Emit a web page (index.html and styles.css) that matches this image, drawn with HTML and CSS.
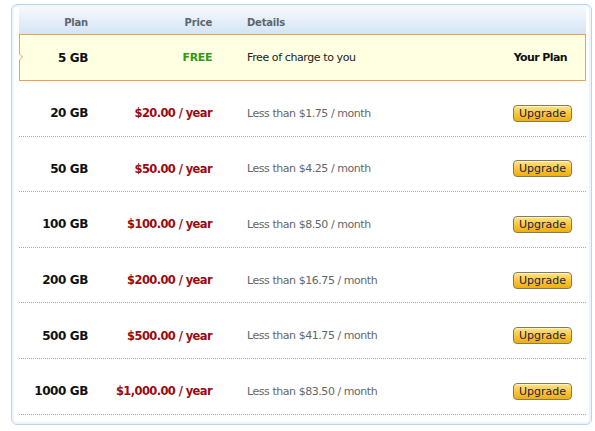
FILE: index.html
```html
<!DOCTYPE html>
<html>
<head>
<meta charset="utf-8">
<link rel="stylesheet" href="styles.css">
</head>
<body>
<div class="frame">
  <div class="plans">
    <div class="row head">
      <div class="c plan">Plan</div>
      <div class="c price">Price</div>
      <div class="c details">Details</div>
      <div class="c action"></div>
    </div>
    <div class="row current">
      <div class="c plan">5 GB</div>
      <div class="c price free">FREE</div>
      <div class="c details">Free of charge to you</div>
      <div class="c action yours">Your Plan</div>
    </div>
    <div class="row item">
      <div class="c plan">20 GB</div>
      <div class="c price">$20.00 / year</div>
      <div class="c details">Less than $1.75 / month</div>
      <div class="c action"><button class="btn">Upgrade</button></div>
    </div>
    <div class="row item">
      <div class="c plan">50 GB</div>
      <div class="c price">$50.00 / year</div>
      <div class="c details">Less than $4.25 / month</div>
      <div class="c action"><button class="btn">Upgrade</button></div>
    </div>
    <div class="row item">
      <div class="c plan">100 GB</div>
      <div class="c price">$100.00 / year</div>
      <div class="c details">Less than $8.50 / month</div>
      <div class="c action"><button class="btn">Upgrade</button></div>
    </div>
    <div class="row item">
      <div class="c plan">200 GB</div>
      <div class="c price">$200.00 / year</div>
      <div class="c details">Less than $16.75 / month</div>
      <div class="c action"><button class="btn">Upgrade</button></div>
    </div>
    <div class="row item">
      <div class="c plan">500 GB</div>
      <div class="c price">$500.00 / year</div>
      <div class="c details">Less than $41.75 / month</div>
      <div class="c action"><button class="btn">Upgrade</button></div>
    </div>
    <div class="row item">
      <div class="c plan">1000 GB</div>
      <div class="c price">$1,000.00 / year</div>
      <div class="c details">Less than $83.50 / month</div>
      <div class="c action"><button class="btn">Upgrade</button></div>
    </div>
  </div>
</div>
</body>
</html>
```
FILE: styles.css
```css
* { box-sizing: border-box; }
html, body { margin: 0; padding: 0; background: #fff; }
body {
  font-family: "DejaVu Sans", Verdana, sans-serif;
  font-size: 11px;
  color: #222;
}
.frame {
  margin: 4px 0 0 11px;
  width: 581px;
  height: 421px;
  padding: 1px 5px 6px 7px;
  border: 1px solid #b7d4f0;
  border-radius: 6px;
  box-shadow: inset 0 0 0 2px #edf4fc;
  background: #fff;
}
.plans { width: 567px; }
.row {
  display: grid;
  grid-template-columns: 81px 119px 267px 100px;
  align-items: center;
}
.c { white-space: nowrap; }
.plan {
  text-align: right; padding-right: 12px;
  font-weight: bold; font-size: 12px; letter-spacing: -0.4px; color: #111;
}
.price {
  text-align: right; padding-right: 7px;
  font-weight: bold; font-size: 11.5px; letter-spacing: -0.6px; color: #9b0a10;
}
.details { padding-left: 28px; color: #666; letter-spacing: -0.45px; }
.action { display: flex; justify-content: flex-end; padding-right: 14px; }

.head {
  height: 28px;
  padding-top: 4px;
  background: linear-gradient(#f7fafd, #d4e4f5);
}
.head .c { font-size: 10px; font-weight: bold; letter-spacing: -0.2px; color: #5c6670; }

.current {
  position: relative;
  height: 47px;
  background: #ffffe1;
  border: 1px solid #f1a04a;
}
.current::before {
  content: "";
  position: absolute;
  left: -1px; top: 18px;
  border-top: 4px solid transparent;
  border-bottom: 4px solid transparent;
  border-left: 4px solid #f1a04a;
}
.current::after {
  content: "";
  position: absolute;
  left: -1px; top: 19px;
  border-top: 3px solid transparent;
  border-bottom: 3px solid transparent;
  border-left: 3px solid #fff;
}
.current .plan { padding-right: 13px; }
.current .price { padding-right: 8px; }
.current .details { padding-left: 27px; color: #222; letter-spacing: -0.4px; }
.free { color: #2f9a17; font-size: 11px; letter-spacing: -0.4px; }
.yours { font-weight: bold; color: #111; padding-right: 20px; letter-spacing: -0.6px; }

.item {
  height: 55.6px;
  padding-top: 10px;
  border-bottom: 1px dotted #a8a8a8;
}
.btn {
  width: 59px;
  height: 17px;
  padding: 0;
  font-family: Tahoma, "DejaVu Sans", sans-serif;
  font-size: 11px;
  color: #1c1c4e;
  border: 1px solid #8a7a50;
  border-radius: 4px;
  background: linear-gradient(#ffe48a, #f9c73a 50%, #eeae12);
  box-shadow: inset 0 1px 0 #fff4c8;
  line-height: 15px;
}
```
